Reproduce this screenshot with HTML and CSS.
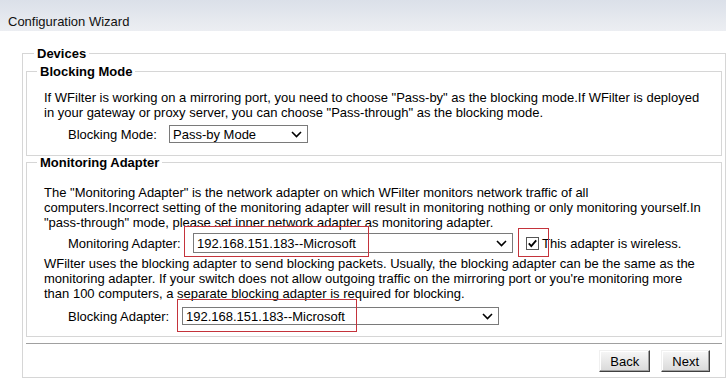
FILE: index.html
```html
<!doctype html>
<html>
<head>
	<title>Configuration Wizard</title>
	<link rel="stylesheet" href="styles.css">
</head>
<body>
<div class="titlebar">Configuration Wizard</div>
<div class="page">
	<fieldset class="devices">
		<legend>Devices</legend>
		<fieldset class="group group-mode">
			<legend>Blocking Mode</legend>
			<p>If WFilter is working on a mirroring port, you need to choose "Pass-by" as the blocking mode.If WFilter is deployed<br>in your gateway or proxy server, you can choose "Pass-through" as the blocking mode.</p>
			<div class="row row-mode">
				<label class="label-mode">Blocking Mode:</label>
				<span class="select select-mode">
					<select><option>Pass-by Mode</option><option>Pass-through Mode</option></select>
					<svg class="chevron" width="11" height="7" viewBox="0 0 11 7"><path d="M1 1 L5.5 5.5 L10 1" fill="none" stroke="#000" stroke-width="1.6"/></svg>
				</span>
			</div>
		</fieldset>
		<fieldset class="group group-adapter">
			<legend>Monitoring Adapter</legend>
			<p>The "Monitoring Adapter" is the network adapter on which WFilter monitors network traffic of all<br>computers.Incorrect setting of the monitoring adapter will result in monitoring nothing or only monitoring yourself.In<br>"pass-through" mode, please set inner network adapter as monitoring adapter.</p>
			<div class="row row-monitor">
				<label class="label-monitor">Monitoring Adapter:</label>
				<span class="select select-monitor">
					<select><option>192.168.151.183--Microsoft</option></select>
					<svg class="chevron" width="11" height="7" viewBox="0 0 11 7"><path d="M1 1 L5.5 5.5 L10 1" fill="none" stroke="#000" stroke-width="1.6"/></svg>
					<span class="mark mark-monitor"></span>
				</span>
				<span class="check">
					<svg width="13" height="13" viewBox="0 0 13 13"><rect x="0.5" y="0.5" width="12" height="12" fill="#fff" stroke="#555"/><path d="M2.8 6.4 L5.3 9.2 L10.2 3.4" fill="none" stroke="#000" stroke-width="1.8"/></svg>
					<span class="mark mark-check"></span>
				</span>
				<label class="check-label">This adapter is wireless.</label>
			</div>
			<p>WFilter uses the blocking adapter to send blocking packets. Usually, the blocking adapter can be the same as the<br>monitoring adapter. If your switch does not allow outgoing traffic on the mirroring port or you're monitoring more<br>than 100 computers, a separate blocking adapter is required for blocking.</p>
			<div class="row row-block">
				<label class="label-block">Blocking Adapter:</label>
				<span class="select select-block">
					<select><option>192.168.151.183--Microsoft</option></select>
					<svg class="chevron" width="11" height="7" viewBox="0 0 11 7"><path d="M1 1 L5.5 5.5 L10 1" fill="none" stroke="#000" stroke-width="1.6"/></svg>
					<span class="mark mark-block"></span>
				</span>
			</div>
		</fieldset>
		<div class="actions">
			<button>Back</button>
			<button>Next</button>
		</div>
	</fieldset>
</div>
</body>
</html>
```

FILE: styles.css
```css
* {
    box-sizing: border-box;
}

body {
    margin: 0;
    font: 13px "Liberation Sans", Arial, sans-serif;
    color: #000;
    background: #fff;
}

.titlebar {
    height: 31px;
    padding: 14px 0 0 8px;
    line-height: 15px;
    color: #111;
    background: linear-gradient(#dbe0e9, #eceef2);
}

.page {
    padding: 15px 0 0 22px;
}

fieldset {
    margin: 0;
    min-width: 0;
    border: 1px solid #d6d6d6;
}

legend {
    font-weight: bold;
    line-height: 15px;
    padding: 0 3px;
}

.devices {
    width: 704px;
    padding: 3px 3px 5px 3px;
}

.devices > legend {
    margin-left: 8px;
}

.group {
    padding: 11px 8px 12px 17px;
}

.group > legend {
    margin-left: -7px;
}

.group-adapter {
    margin-top: -1px;
    padding-top: 15px;
    padding-bottom: 11px;
}

p {
    margin: 0;
    line-height: 15px;
}

.row {
    display: flex;
    align-items: center;
    padding-left: 24px;
}

.row label {
    flex: none;
}

.label-mode {
    width: 101px;
}

.label-monitor {
    width: 125px;
}

.label-block {
    width: 114px;
}

.row-mode {
    margin-top: 5px;
}

.row-monitor {
    margin: 3px 0 3px;
}

.row-block {
    margin-top: 6px;
}

.select {
    position: relative;
    display: inline-block;
}

.select select {
    appearance: none;
    -webkit-appearance: none;
    display: block;
    height: 18px;
    margin: 0;
    padding: 0 0 0 3px;
    border: 1px solid #7a7a7a;
    border-radius: 0;
    background: #fff;
    font: 13px "Liberation Sans", Arial, sans-serif;
    color: #000;
}

.chevron {
    position: absolute;
    right: 6px;
    top: 6px;
}

.select-mode select {
    width: 139px;
}

.select-monitor select {
    width: 320px;
    height: 20px;
}

.select-monitor .chevron {
    top: 7px;
}

.select-block select {
    width: 317px;
}

.check {
    position: relative;
    display: inline-block;
    width: 13px;
    height: 13px;
    margin-left: 13px;
}

.check svg {
    display: block;
}

.check-label {
    margin-left: 3px;
}

.mark {
    position: absolute;
    border: 1px solid #c4333b;
}

.mark-monitor {
    left: -9px;
    top: -7px;
    width: 185px;
    height: 31px;
}

.mark-check {
    left: -8px;
    top: -9px;
    width: 31px;
    height: 29px;
}

.mark-block {
    left: -5px;
    top: -8px;
    width: 180px;
    height: 33px;
}

.actions {
    display: flex;
    justify-content: flex-end;
    gap: 11px;
    margin-top: 6px;
    padding: 6px 12px 0 0;
    border-top: 1px solid #a0a0a0;
}

.actions button {
    height: 22px;
    padding: 0 10px;
    font: 13px "Liberation Sans", Arial, sans-serif;
    color: #000;
    border: 1px solid;
    border-color: #f0f0f0 #404040 #404040 #f0f0f0;
    box-shadow: inset -1px -1px #a0a0a0, inset 1px 1px #fff;
    background: linear-gradient(#f7f7f7, #d9d9d9);
}
```
